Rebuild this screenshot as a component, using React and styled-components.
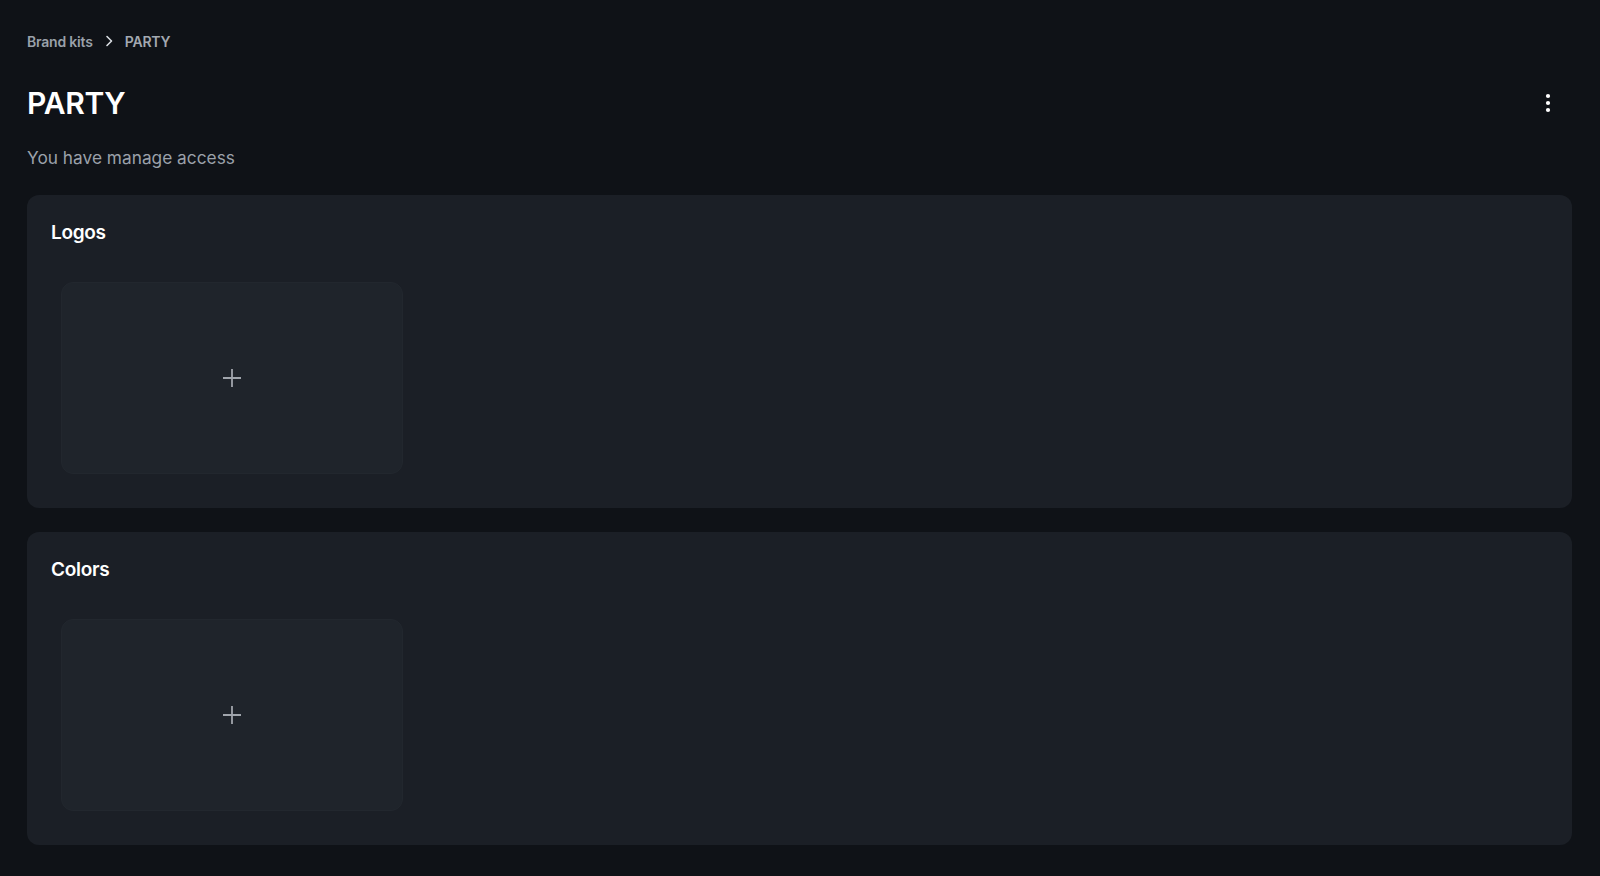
import React from "react";
import styled, { createGlobalStyle } from "styled-components";

const GlobalStyle = createGlobalStyle`
  html, body {
    margin: 0;
    background: #0f1217;
    font-family: Inter, "Noto Sans", sans-serif;
  }
`;

const Page = styled.div`
  display: flex;
  flex-direction: column;
  padding: 31px 28px 30px 27px;
  min-height: 876px;
  box-sizing: border-box;
  background: #0f1217;
`;

const Breadcrumb = styled.nav`
  display: flex;
  align-items: center;
  gap: 12px;
  height: 20px;
  font-size: 14px;
  font-weight: 600;
  color: #9aa1aa;
  letter-spacing: -0.2px;
`;

const Crumb = styled.span`
  color: ${(p) => (p.$current ? "#a3a9b1" : "#9aa1aa")};
`;

const Header = styled.div`
  display: flex;
  align-items: center;
  justify-content: space-between;
  margin-top: 34px;
  height: 36px;
`;

const Title = styled.h1`
  margin: 0;
  font-size: 30px;
  line-height: 36px;
  font-weight: 600;
  color: #ffffff;
  letter-spacing: -0.3px;
`;

const MenuButton = styled.button`
  width: 48px;
  height: 36px;
  display: flex;
  align-items: center;
  justify-content: center;
  background: transparent;
  border: none;
  padding: 0;
  cursor: pointer;
`;

const Subtitle = styled.p`
  margin: 25px 0 0;
  font-size: 17.3px;
  line-height: 24px;
  color: #9ba1aa;
`;

const Sections = styled.div`
  display: flex;
  flex-direction: column;
  gap: 24px;
  margin-top: 25px;
`;

const Card = styled.section`
  background: #1b1f26;
  border-radius: 12px;
  padding: 24px 24px 24px;
`;

const CardTitle = styled.h2`
  margin: 0;
  font-size: 19px;
  line-height: 28px;
  font-weight: 600;
  color: #ffffff;
  letter-spacing: -0.3px;
`;

const Grid = styled.div`
  display: grid;
  grid-template-columns: repeat(auto-fill, 362px);
  margin-top: 25px;
`;

const AddTile = styled.button`
  margin: 10px;
  width: 342px;
  height: 192px;
  display: flex;
  align-items: center;
  justify-content: center;
  background: #1f242b;
  border: 1px solid #22272e;
  border-radius: 12px;
  padding: 0;
  cursor: pointer;
`;

const Chevron = () => (
  <svg width="8" height="12" viewBox="0 0 8 12" fill="none">
    <path d="M2 1.5 6.5 6 2 10.5" stroke="#d9dde2" strokeWidth="1.6" strokeLinecap="round" strokeLinejoin="round" />
  </svg>
);

const Kebab = () => (
  <svg width="6" height="20" viewBox="0 0 6 20">
    <circle cx="3" cy="3" r="2.1" fill="#fff" />
    <circle cx="3" cy="10" r="2.1" fill="#fff" />
    <circle cx="3" cy="17" r="2.1" fill="#fff" />
  </svg>
);

const Plus = () => (
  <svg width="20" height="20" viewBox="0 0 20 20" fill="none">
    <path d="M10 1v18M1 10h18" stroke="#a0a5ac" strokeWidth="1.8" />
  </svg>
);

const sections = ["Logos", "Colors"];

export default function App() {
  return (
    <>
      <GlobalStyle />
      <Page>
        <Breadcrumb>
          <Crumb>Brand kits</Crumb>
          <Chevron />
          <Crumb $current>PARTY</Crumb>
        </Breadcrumb>
        <Header>
          <Title>PARTY</Title>
          <MenuButton aria-label="More">
            <Kebab />
          </MenuButton>
        </Header>
        <Subtitle>You have manage access</Subtitle>
        <Sections>
          {sections.map((s) => (
            <Card key={s}>
              <CardTitle>{s}</CardTitle>
              <Grid>
                <AddTile aria-label={`Add ${s}`}>
                  <Plus />
                </AddTile>
              </Grid>
            </Card>
          ))}
        </Sections>
      </Page>
    </>
  );
}
